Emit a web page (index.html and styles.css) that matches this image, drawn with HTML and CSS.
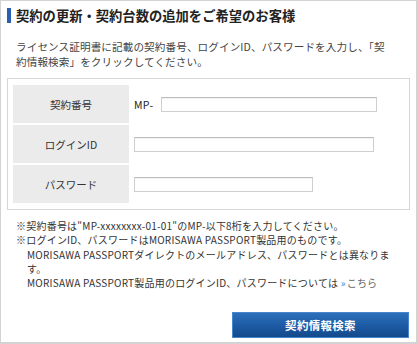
FILE: index.html
```html
<!DOCTYPE html>
<html lang="ja">
<head>
<meta charset="utf-8">
<link rel="stylesheet" href="styles.css">
</head>
<body>
<div class="panel">
  <h2 class="title">契約の更新・契約台数の追加をご希望のお客様</h2>
  <p class="lead">ライセンス証明書に記載の契約番号、ログインID、パスワードを入力し、「契<br>約情報検索」をクリックしてください。</p>
  <div class="formbox">
    <div class="row">
      <div class="label">契約番号</div>
      <div class="field"><span class="prefix">MP-</span><span class="input input-contract"></span></div>
    </div>
    <div class="row">
      <div class="label">ログインID</div>
      <div class="field"><span class="input input-login"></span></div>
    </div>
    <div class="row">
      <div class="label">パスワード</div>
      <div class="field"><span class="input input-pass"></span></div>
    </div>
  </div>
  <div class="notes">
    <p>※契約番号は"MP-xxxxxxxx-01-01"のMP-以下8桁を入力してください。</p>
    <p>※ログインID、パスワードはMORISAWA PASSPORT製品用のものです。</p>
    <p class="indent">MORISAWA PASSPORTダイレクトのメールアドレス、パスワードとは異なりま<br>す。</p>
    <p class="indent">MORISAWA PASSPORT製品用のログインID、パスワードについては <a class="link" href="#"><span class="raquo">»</span>こちら</a></p>
  </div>
  <div class="actions">
    <button class="btn" type="button">契約情報検索</button>
  </div>
</div>
</body>
</html>
```
FILE: styles.css
```css
html, body {
  margin: 0;
  padding: 0;
  background: #fff;
}
body {
  font-family: "Noto Sans CJK JP", "Liberation Sans", sans-serif;
  color: #333;
}
.panel {
  width: 418px;
  height: 344px;
  box-sizing: border-box;
  border-style: solid;
  border-color: #d3d3d3;
  border-width: 1px 2px 2px 1px;
  padding: 7px 6px 0 6px;
  display: flex;
  flex-direction: column;
}
.title {
  margin: 0;
  border-left: 4px solid #2b5fb3;
  padding-left: 5px;
  font-size: 13.3px;
  line-height: 15px;
  font-weight: bold;
  color: #222;
  height: 15px;
}
.lead {
  margin: 16px 0 0 9px;
  font-size: 10.6px;
  line-height: 15px;
  color: #444;
  letter-spacing: 0.1px;
}
.formbox {
  margin-top: 9px;
  border: 1px solid #d6d6d6;
  padding: 6px 5px 6px 5px;
  display: flex;
  flex-direction: column;
  gap: 2px;
}
.row {
  display: flex;
  height: 38px;
}
.label {
  width: 116px;
  background: #ebebeb;
  display: flex;
  align-items: center;
  justify-content: center;
  font-size: 10.5px;
  color: #333;
}
.field {
  display: flex;
  align-items: center;
  padding-left: 5px;
}
.prefix {
  font-size: 10.5px;
  color: #222;
  width: 27px;
  letter-spacing: 0.3px;
}
.input {
  display: block;
  height: 15px;
  box-sizing: border-box;
  border: 1px solid #cfcfcf;
  border-top-color: #bdbdbd;
  box-shadow: inset 0 1px 1px rgba(0,0,0,0.06);
  background: #fff;
}
.input-contract { width: 216px; }
.input-login { width: 240px; }
.input-pass { width: 179px; }
.notes {
  margin: 9px 0 0 9px;
  font-size: 10px;
  line-height: 14.3px;
  color: #333;
  letter-spacing: 0.22px;
}
.notes p {
  margin: 0;
}
.notes .indent {
  padding-left: 11px;
}
.link {
  color: #666;
  text-decoration: none;
}
.raquo {
  color: #3d86d9;
  margin-right: 1px;
}
.actions {
  display: flex;
  justify-content: flex-end;
  margin-top: 22px;
  padding-right: 1px;
}
.btn {
  width: 177px;
  height: 26px;
  border: 1px solid #4a86cc;
  background: linear-gradient(#2c6fba 0%, #1e5ca6 50%, #134a8c 100%);
  color: #fff;
  font-family: "Noto Sans CJK JP", sans-serif;
  font-size: 11.5px;
  font-weight: bold;
  padding: 0;
  letter-spacing: 0.3px;
}
```
